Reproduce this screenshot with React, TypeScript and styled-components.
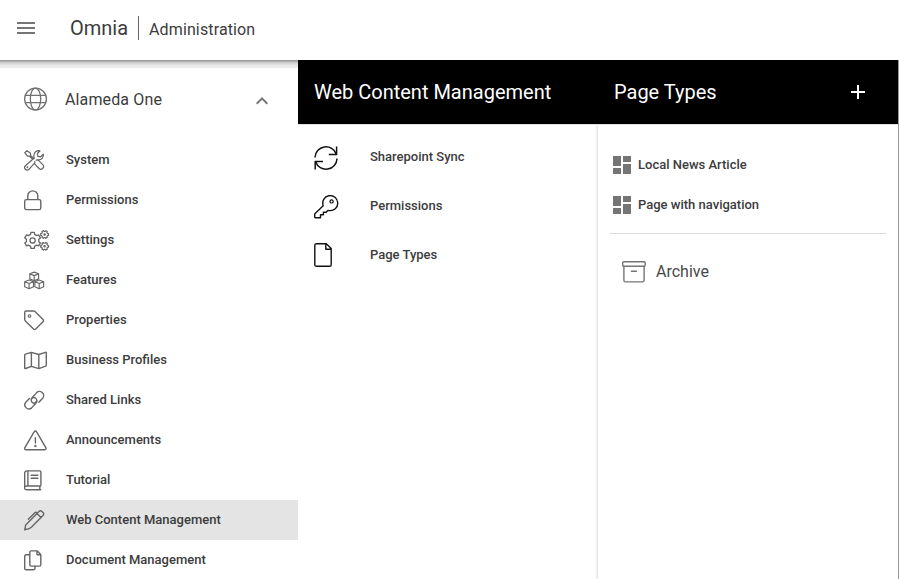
import React from "react";
import styled, { createGlobalStyle } from "styled-components";

const GlobalStyle = createGlobalStyle`
  *, *::before, *::after { box-sizing: border-box; }
  html, body { margin: 0; padding: 0; background: #fff; overflow: hidden; }
  body { font-family: Roboto, "Liberation Sans", sans-serif; color: #3c3c3c; }
  ul { list-style: none; margin: 0; padding: 0; }
  h1, h2, p { margin: 0; font-weight: 400; }
  button { border: 0; background: none; padding: 0; margin: 0; color: inherit; display: block; }
  svg { display: block; }
`;

const Page = styled.div`
  width: 899px;
  height: 579px;
  display: flex;
  flex-direction: column;
  overflow: hidden;
`;

const TopBar = styled.header`
  height: 60px;
  flex: none;
  display: flex;
  align-items: center;
  padding-left: 17px;
  background: #fff;
`;

const MenuButton = styled.button`
  width: 18px;
  margin: -4px 35px 0 0;
  color: #666;
`;

const Brand = styled.h1`
  font-size: 20px;
  line-height: 24px;
  width: 68px;
  margin-top: -4px;
  white-space: nowrap;
`;

const Divider = styled.span`
  width: 1px;
  height: 24px;
  margin: -4px 10px 0 0;
  background: #666;
`;

const Section = styled.p`
  font-size: 16px;
  line-height: 20px;
  letter-spacing: 0.13px;
`;

const Body = styled.div`
  flex: 1;
  min-height: 0;
  display: flex;
`;

const Sidebar = styled.nav`
  width: 298px;
  flex: none;
`;

const BarShadow = styled.div`
  height: 8px;
  background: linear-gradient(#8f8f8f 0, #b5b5b5 1.5px, #d2d2d2 3px, #e6e6e6 5px, #efefef 8px);
`;

const Tenant = styled.div`
  height: 64px;
  display: flex;
  align-items: center;
  padding: 0 30px 2px 24px;
  color: #707070;
`;

const TenantName = styled.span`
  flex: 1;
  margin-left: 17px;
  padding-top: 2px;
  font-size: 16px;
  line-height: 20px;
  letter-spacing: 0.13px;
  color: #3c3c3c;
`;

const Chevron = styled.svg`
  margin-top: 3px;
`;

const NavList = styled.ul`
  padding-top: 8px;
`;

const NavItem = styled.li<{ $active?: boolean }>`
  height: 40px;
  display: flex;
  align-items: center;
  padding-left: 24px;
  color: #666;
  background: ${(p) => (p.$active ? "#e4e4e4" : "transparent")};
`;

const Label = styled.span`
  font-size: 13px;
  line-height: 16px;
  font-weight: 500;
  color: #3c3c3c;
  white-space: nowrap;
`;

const NavLabel = styled(Label)`
  margin-left: 14px;
  padding-bottom: 1px;
`;

const Panel = styled.section<{ $last?: boolean }>`
  width: ${(p) => (p.$last ? "301px" : "300px")};
  flex: none;
  border-right: ${(p) => (p.$last ? "1px solid #999" : "0")};
`;

const PanelHeader = styled.header`
  height: 64px;
  display: flex;
  align-items: center;
  justify-content: space-between;
  padding: 0 33px 0 16px;
  background: #000;
  color: #fff;
`;

const PanelTitle = styled.h2`
  font-size: 20px;
  line-height: 24px;
  white-space: nowrap;
`;

const PanelBody = styled.div<{ $edge?: boolean }>`
  height: 455px;
  border-top: 1px solid #e0e0e0;
  ${(p) =>
    p.$edge
      ? "background: linear-gradient(to right, #fff 297px, #f4f4f4 298.5px, #dedede 300px);"
      : ""}
`;

const ToolList = styled.ul`
  padding-top: 8px;
`;

const ToolItem = styled.li`
  height: 49px;
  display: flex;
  align-items: center;
  padding-left: 16px;
  color: #111;
`;

const ToolLabel = styled(Label)`
  margin-left: 28px;
  padding-bottom: 2px;
`;

const TypeList = styled.ul`
  margin: 0 12px;
  padding: 20px 0 8px;
  border-bottom: 1px solid #dedede;
`;

const TypeItem = styled.li`
  height: 40px;
  display: flex;
  align-items: center;
  padding-left: 3px;
  color: #757575;
`;

const TypeLabel = styled(Label)`
  margin-left: 7px;
  padding-bottom: 1px;
`;

const Archive = styled.div`
  display: flex;
  align-items: center;
  height: 24px;
  margin: 26px 0 0 24px;
  color: #757575;
`;

const ArchiveLabel = styled.span`
  margin-left: 10px;
  padding-bottom: 1px;
  font-size: 16px;
  line-height: 20px;
  color: #484848;
`;

type IconProps = { w?: number; h?: number; sw?: number; children: React.ReactNode };

const Icon = ({ w = 28, h = 24, sw = 1.4, children }: IconProps) => (
  <svg
    width={w}
    height={h}
    viewBox={`0 0 ${w} ${h}`}
    fill="none"
    stroke="currentColor"
    strokeWidth={sw}
    strokeLinecap="round"
    strokeLinejoin="round"
    aria-hidden="true"
  >
    {children}
  </svg>
);

const gearPath = (cx: number, cy: number, outer: number, inner: number, teeth: number, rot = 0) => {
  const step = (Math.PI * 2) / teeth;
  const pts: string[] = [];
  for (let i = 0; i < teeth; i++) {
    const a = i * step + rot;
    [
      [-0.31, inner],
      [-0.2, outer],
      [0.2, outer],
      [0.31, inner],
    ].forEach(([f, r]) => {
      pts.push(`${(cx + r * Math.cos(a + f * step)).toFixed(2)} ${(cy + r * Math.sin(a + f * step)).toFixed(2)}`);
    });
  }
  return `M${pts.join("L")}Z`;
};

const cubePath = (x: number, y: number) =>
  `M${x} ${y}l4.4-1.7 4.4 1.7v5.1l-4.4 1.9-4.4-1.9zl4.4 1.8 4.4-1.8M${x + 4.4} ${y + 1.8}v5.1`;

const ToolsIcon = () => (
  <Icon sw={1.25}>
    <path d="M.8 4.6 2.9 2.7 6.5 5.3v2.2l3.4 3.2M.8 4.6l2.7 3.6h2.2l3 3.1" />
    <path d="m12.2 12.1 1.8-.2 5 5a2.1 2.1 0 0 1 0 3.1l-.7.7a2.1 2.1 0 0 1-3 0l-4.7-4.8.2-2.2" />
    <path d="m8.8 11.2-7.4 6.5a2.5 2.5 0 1 0 3.5 3.6l5.4-5.9" />
    <path d="M10.2 10.1 9.8 8A5 5 0 0 1 16 2.8L13.4 5.5l.5 2.9 2.8.4 2.6-2.6a4.8 4.8 0 0 1-5.1 5.7" />
    <circle cx="3.4" cy="19.2" r=".35" />
  </Icon>
);

const LockIcon = () => (
  <Icon>
    <rect x=".7" y="11.6" width="16.1" height="10" rx="1.7" />
    <path d="M3.8 11.4V7.9a5 5 0 0 1 10 0v3.5" />
  </Icon>
);

const SettingsIcon = () => (
  <Icon sw={1.3}>
    <path d={gearPath(8.6, 12.4, 8.2, 6.3, 6, Math.PI / 6)} />
    <circle cx="8.6" cy="12.4" r="2.6" />
    <g strokeWidth="1.2">
      <path d={gearPath(20.6, 6.5, 4, 3.1, 6)} />
      <circle cx="20.6" cy="6.5" r=".7" />
      <path d={gearPath(20.6, 18.3, 4, 3.1, 6)} />
      <circle cx="20.6" cy="18.3" r=".7" />
    </g>
  </Icon>
);

const CubesIcon = () => (
  <Icon sw={1.15}>
    <path d={cubePath(5.8, 5.8)} />
    <path d={cubePath(0.7, 13.7)} />
    <path d={cubePath(10.8, 13.7)} />
  </Icon>
);

const TagIcon = () => (
  <Icon>
    <path d="M.7 4.5c0-.9.6-1.5 1.5-1.5h7.4c.6 0 1 .2 1.4.6l8 8c.7.7.7 1.5 0 2.2l-7.3 7.3c-.7.7-1.5.7-2.2 0l-8.1-8.1c-.4-.4-.7-.8-.7-1.4z" />
    <circle cx="5.5" cy="8" r="1.3" strokeWidth="1.1" />
  </Icon>
);

const MapIcon = () => (
  <Icon>
    <path d="M.7 7.2c0-.5.2-.8.7-1l6-1.8 7.4 2.1 6.7-2.2c.5-.1.8.1.8.6v12.3c0 .5-.2.8-.7 1l-6.8 2.4-7.4-2.2-5.8 2.1c-.5.1-.9-.1-.9-.6zM7.4 4.6v13.6M14.8 6.6v13.8" />
  </Icon>
);

const LinkIcon = () => (
  <Icon>
    <path d="M7.6 11.1C8.5 8.8 12.1 8.9 12.8 12c.3 1.2-.1 2.4-1 3.3l-4.4 4.8A4.1 4.1 0 0 1 1.8 14.2L5.4 10.6" />
    <path d="M12.3 13.6C11.5 15.9 8 15.8 7.3 12.8c-.3-1.2.1-2.4 1-3.3l4.4-4.9a4.1 4.1 0 0 1 5.7 5.9L14.9 14.2" />
  </Icon>
);

const WarningIcon = () => (
  <Icon>
    <path d="M10.1 3.8c.6-1.1 1.9-1.1 2.5 0l9.2 15.8c.6 1.1 0 2.1-1.2 2.1H2.1c-1.2 0-1.8-1-1.2-2.1zM11.35 9.6l.1 5.4" />
    <circle cx="11.4" cy="18" r=".5" />
  </Icon>
);

const BookIcon = () => (
  <Icon>
    <path d="M16.7 18H3C-.2 18-.2 21.8 3 21.8h13.7M15.8 18.2v3.5M.7 19.6V5c0-1.3.9-2.1 2.1-2.1h12.9c.7 0 1.2.4 1.2 1.1v12.8c0 .8-.4 1.2-1.2 1.2M3.9 3v15M7.2 7.3h6.6M7.2 10.3h6.6" />
  </Icon>
);

const PenIcon = () => (
  <Icon>
    <path d="m.7 21.8 1-4.9L14.9 3.5a2.2 2.2 0 0 1 3.1 0l1 1a2.2 2.2 0 0 1 0 3.1L7.1 19.5c-1.6 1.4-3.7 2-6.4 2.3zM12.9 5.4l4.2 4.2M4.3 11.2l6.8-6.7c.5-.5.9-.5 1.4 0l1 1" />
  </Icon>
);

const CopyIcon = () => (
  <Icon>
    <path d="M11 18.1v2.1c0 1-.5 1.5-1.5 1.5H2.2c-1 0-1.5-.5-1.5-1.5V8.2c0-1 .5-1.5 1.5-1.5h3.4" />
    <path d="M5.8 4.3c0-.9.5-1.4 1.4-1.4h6.1l3.5 3.5v10.3c0 .9-.5 1.4-1.4 1.4H7.2c-.9 0-1.4-.5-1.4-1.4zM13 3v3.7h3.7" />
  </Icon>
);

const GlobeIcon = () => (
  <Icon w={24} h={24} sw={1.3}>
    <circle cx="11.5" cy="12" r="10.9" />
    <ellipse cx="11.5" cy="12" rx="5.2" ry="10.9" />
    <path d="M1.3 8.4h20.4M1.3 15.6h20.4" />
  </Icon>
);

const SyncIcon = () => (
  <Icon sw={1.5}>
    <path strokeLinecap="butt" d="M1 11.6A11 11 0 0 1 22.4 8.2M22.6.5v8.1h-7.8M23 12.4A11 11 0 0 1 1.6 15.8M1.2 23.5v-8.1H9" />
  </Icon>
);

const KeyIcon = () => (
  <Icon sw={1.4}>
    <path d="M9.2 10.7A7.5 7.5 0 1 1 15.3 15.6l-1.4-.2-1.8 1.9H9.4v2.5H6.5v3H1.6c-.6 0-.9-.3-.9-.9v-2.6c0-.3.1-.6.4-.9z" />
    <circle cx="17.6" cy="6.4" r="1.6" strokeWidth="1.2" />
  </Icon>
);

const FileIcon = () => (
  <svg width="28" height="26" viewBox="0 0 28 26" fill="none" stroke="currentColor" strokeWidth="1.4" strokeLinejoin="round" aria-hidden="true">
    <path d="M.8 2.3C.8 1.3 1.4.7 2.4.7h9.9L17.2 5.5v16.2c0 1-.6 1.6-1.6 1.6H2.4c-1 0-1.6-.6-1.6-1.6zM11.8.8v5.4h5.3" />
  </svg>
);

const ArchiveIcon = () => (
  <Icon w={24} h={24} sw={1.4}>
    <rect x=".7" y="1.8" width="22.5" height="4.4" rx="1" />
    <path d="M1.9 6.3v14c0 1.1.5 1.6 1.6 1.6h17c1.1 0 1.6-.5 1.6-1.6v-14M9.4 11.2h5.1" />
  </Icon>
);

const DashboardIcon = () => (
  <svg width="18" height="18" viewBox="0 0 18 18" fill="currentColor" aria-hidden="true">
    <path d="M0 0h8v10H0zM0 12h8v6H0zM10 0h8v6h-8zM10 8h8v10h-8z" />
  </svg>
);

const navItems = [
  { label: "System", Glyph: ToolsIcon },
  { label: "Permissions", Glyph: LockIcon },
  { label: "Settings", Glyph: SettingsIcon },
  { label: "Features", Glyph: CubesIcon },
  { label: "Properties", Glyph: TagIcon },
  { label: "Business Profiles", Glyph: MapIcon },
  { label: "Shared Links", Glyph: LinkIcon },
  { label: "Announcements", Glyph: WarningIcon },
  { label: "Tutorial", Glyph: BookIcon },
  { label: "Web Content Management", Glyph: PenIcon, active: true },
  { label: "Document Management", Glyph: CopyIcon },
];

const toolItems = [
  { label: "Sharepoint Sync", Glyph: SyncIcon },
  { label: "Permissions", Glyph: KeyIcon },
  { label: "Page Types", Glyph: FileIcon },
];

const pageTypes = ["Local News Article", "Page with navigation"];

export default function App() {
  return (
    <>
      <GlobalStyle />
      <Page>
        <TopBar>
          <MenuButton aria-label="Menu">
            <svg width="18" height="12" viewBox="0 0 18 12" fill="#757575">
              <path d="M0 0h18v2H0zM0 5h18v2H0zM0 10h18v2H0z" />
            </svg>
          </MenuButton>
          <Brand>Omnia</Brand>
          <Divider />
          <Section>Administration</Section>
        </TopBar>
        <Body>
          <Sidebar>
            <BarShadow />
            <Tenant>
              <GlobeIcon />
              <TenantName>Alameda One</TenantName>
              <Chevron width="12" height="8" viewBox="0 0 12 8" fill="#757575">
                <path d="M6 0l6 6-1.4 1.4L6 2.8 1.4 7.4 0 6z" />
              </Chevron>
            </Tenant>
            <NavList>
              {navItems.map(({ label, Glyph, active }) => (
                <NavItem key={label} $active={active}>
                  <Glyph />
                  <NavLabel>{label}</NavLabel>
                </NavItem>
              ))}
            </NavList>
          </Sidebar>
          <Panel>
            <PanelHeader>
              <PanelTitle>Web Content Management</PanelTitle>
            </PanelHeader>
            <PanelBody $edge>
              <ToolList>
                {toolItems.map(({ label, Glyph }) => (
                  <ToolItem key={label}>
                    <Glyph />
                    <ToolLabel>{label}</ToolLabel>
                  </ToolItem>
                ))}
              </ToolList>
            </PanelBody>
          </Panel>
          <Panel $last>
            <PanelHeader>
              <PanelTitle>Page Types</PanelTitle>
              <button aria-label="Add page type">
                <svg width="14" height="14" viewBox="0 0 14 14" fill="#fff">
                  <path d="M6 0h2v6h6v2H8v6H6V8H0V6h6z" />
                </svg>
              </button>
            </PanelHeader>
            <PanelBody>
              <TypeList>
                {pageTypes.map((name) => (
                  <TypeItem key={name}>
                    <DashboardIcon />
                    <TypeLabel>{name}</TypeLabel>
                  </TypeItem>
                ))}
              </TypeList>
              <Archive>
                <ArchiveIcon />
                <ArchiveLabel>Archive</ArchiveLabel>
              </Archive>
            </PanelBody>
          </Panel>
        </Body>
      </Page>
    </>
  );
}
